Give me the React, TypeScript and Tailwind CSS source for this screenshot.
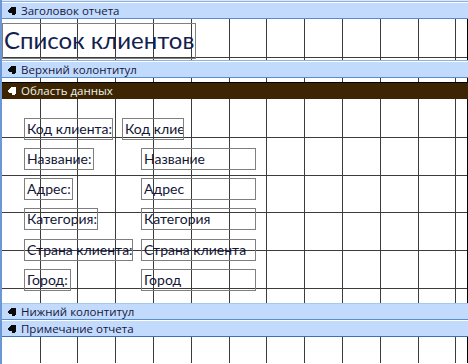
import React from "react";

const VX = [40, 77, 115, 153, 191, 229, 266, 304, 342, 380, 418, 455];

function Grid({ h }: { h: number }) {
  const hs: number[] = [];
  for (let k = 1; Math.round(37.795 * k) < h; k++) hs.push(Math.round(37.795 * k));
  return (
    <svg className="absolute inset-0 pointer-events-none" width={466} height={h} shapeRendering="crispEdges">
      {VX.map((x) => (
        <line key={"v" + x} x1={x - 2 + 0.5} y1={0} x2={x - 2 + 0.5} y2={h} stroke="#3c3c3c" strokeWidth={1} />
      ))}
      {hs.map((y) => (
        <line key={"h" + y} x1={0} y1={y + 0.5} x2={466} y2={y + 0.5} stroke="#3c3c3c" strokeWidth={1} />
      ))}
    </svg>
  );
}

function Icon({ color }: { color: string }) {
  return (
    <svg width="10" height="10" viewBox="0 0 10 10" className="shrink-0" shapeRendering="crispEdges">
      <path d="M0 5 L4 1 L9 1 L9 7 L7 9 L5 9 L5 7 L2 7 Z" fill={color} />
    </svg>
  );
}

const barFont = { fontFamily: '"Open Sans", sans-serif' };

function BarInner({ label, bottom }: { label: string; bottom: string }) {
  return (
    <div className={"h-[15px] bg-[#c2dbfc] border-b flex items-center gap-[4px] pl-[5px] box-content " + bottom}>
      <Icon color="#0a0a0a" />
      <span className="text-[11.5px] leading-none text-[#16163c] whitespace-nowrap" style={barFont}>
        {label}
      </span>
    </div>
  );
}

function Section({ h, children, className }: { h: number; children?: React.ReactNode; className?: string }) {
  return (
    <div className={"relative bg-white overflow-hidden border-r border-black " + (className ?? "")} style={{ height: h }}>
      <Grid h={h} />
      {children}
    </div>
  );
}

const ctrlFont = { fontFamily: 'Lato, "Open Sans", sans-serif' };

function Box({ w, text }: { w: string; text: string }) {
  return (
    <div
      className={"relative h-[22px] shrink-0 border border-[#7f7f7f] overflow-hidden whitespace-nowrap pl-[2px] text-[14px] leading-[20px] text-[#131636] " + w}
      style={ctrlFont}
    >
      {text}
    </div>
  );
}

function Row({ label, lw, field }: { label: string; lw: string; field: string }) {
  return (
    <div className="grid grid-cols-[117px_115px]">
      <Box w={lw} text={label} />
      <Box w="w-[115px]" text={field} />
    </div>
  );
}

export default function App() {
  return (
    <div className="w-[468px] h-[364px] overflow-hidden bg-white border-l-2 border-[#6b98d4] flex flex-col">
      <div className="border-t border-[#dbe7f8]">
        <div className="border-t border-[#8db0e2]">
          <div className="border-t border-white">
            <BarInner label="Заголовок отчета" bottom="border-[#5a8cd2]" />
          </div>
        </div>
      </div>
      <Section h={41} className="pt-[4px]">
        <div
          className="relative w-[194px] h-[36px] border border-[#7f7f7f] pl-[1px] text-[24px] leading-[32px] text-[#13204f] whitespace-nowrap"
          style={ctrlFont}
        >
          Список клиентов
        </div>
      </Section>
      <div className="border-t border-[#8db0e2]">
        <div className="border-t border-white">
          <BarInner label="Верхний колонтитул" bottom="border-[#5a8cd2]" />
        </div>
      </div>
      <Section h={4} />
      <div className="h-[17px] bg-[#3d2504] border-t border-black flex items-center gap-[4px] pl-[5px]">
        <Icon color="#ffffff" />
        <span className="text-[11.5px] leading-none text-[#eef2e4] whitespace-nowrap" style={barFont}>
          Область данных
        </span>
      </div>
      <Section h={204} className="pt-[19px] pl-[22px]">
        <div className="flex flex-col gap-[8px]">
          <div className="flex gap-[9px]">
            <Box w="w-[89px]" text="Код клиента:" />
            <Box w="w-[62px]" text="Код клие" />
          </div>
          <Row label="Название:" lw="w-[70px]" field="Название" />
          <Row label="Адрес:" lw="w-[49px]" field="Адрес" />
          <Row label="Категория:" lw="w-[74px]" field="Категория" />
          <div className="grid grid-cols-[117px_115px] mt-[1px]">
            <Box w="w-[109px]" text="Страна клиента:" />
            <Box w="w-[115px]" text="Страна клиента" />
          </div>
          <Row label="Город:" lw="w-[47px]" field="Город" />
        </div>
      </Section>
      <div className="border-t border-[#a7c5ee]">
        <BarInner label="Нижний колонтитул" bottom="border-[#5a8cd2]" />
      </div>
      <div className="border-t border-white">
        <BarInner label="Примечание отчета" bottom="border-[#3f70b8]" />
      </div>
      <Section h={26} />
    </div>
  );
}
